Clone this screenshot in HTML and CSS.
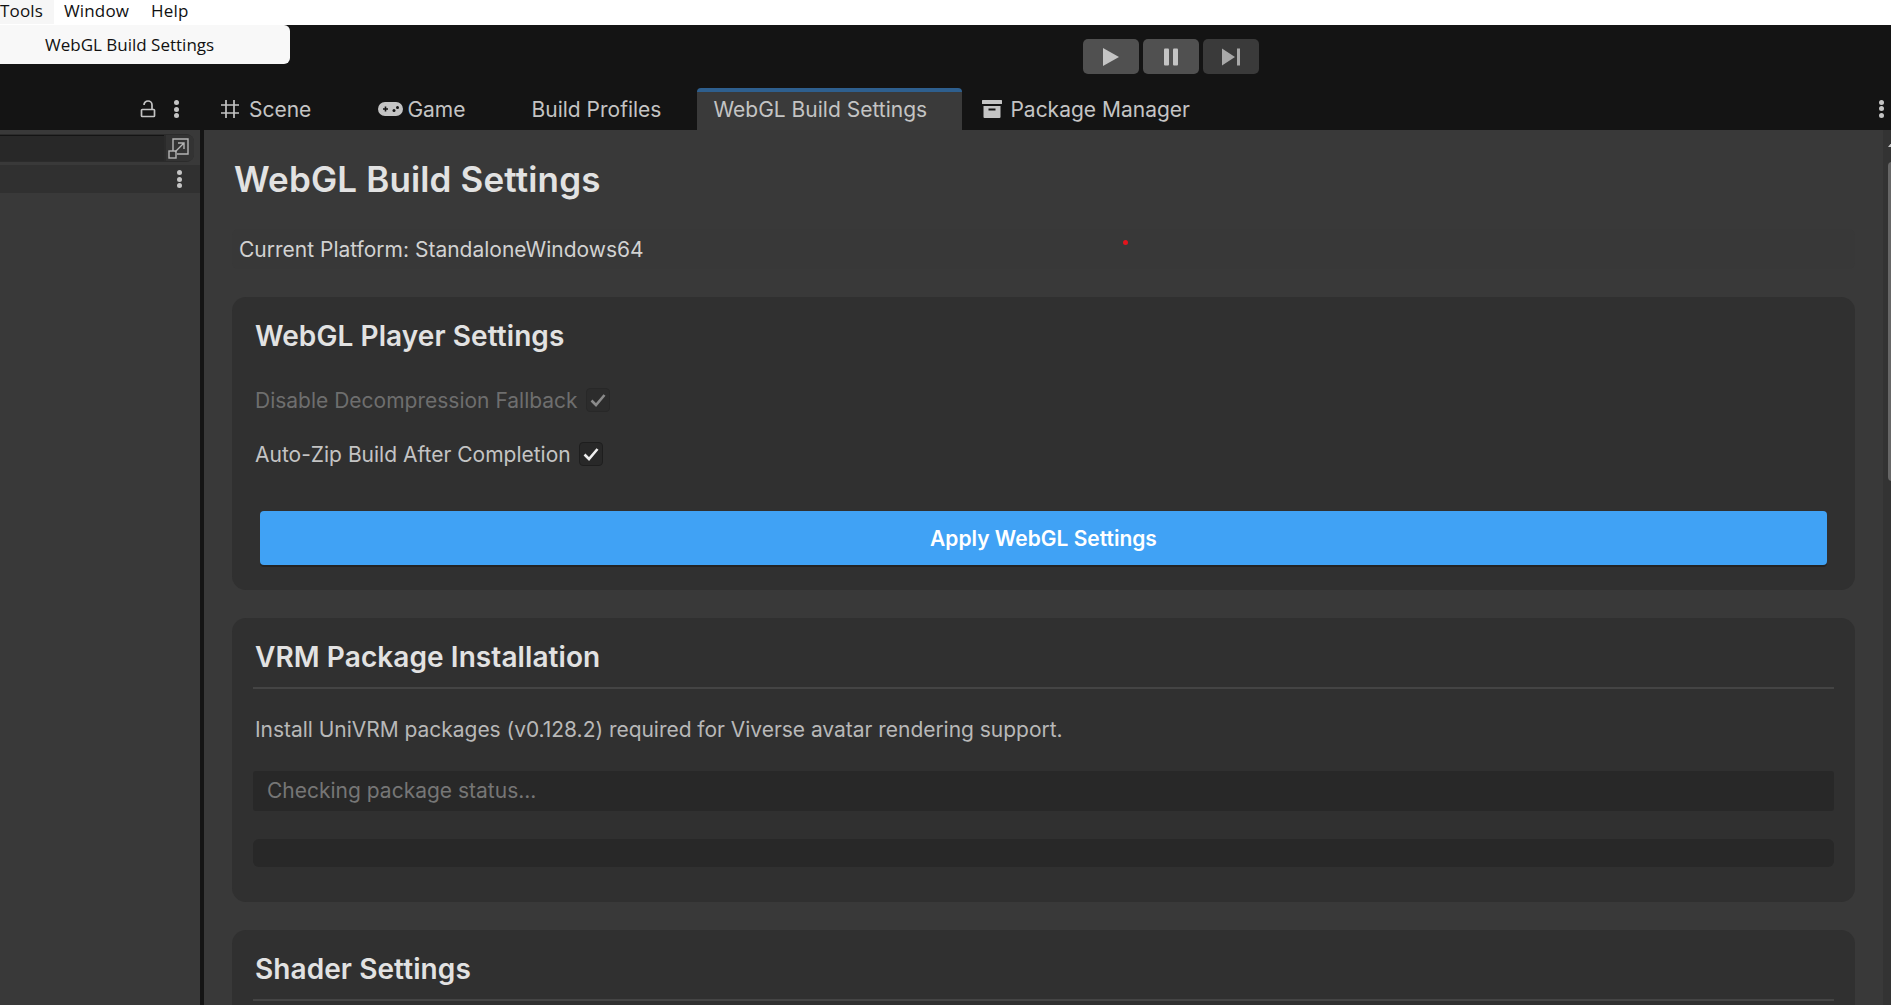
FILE: index.html
```html
<!doctype html>
<html lang="en">
    <head>
        <meta charset="UTF-8" />
        <title>WebGL Build Settings</title>
        <link rel="stylesheet" href="styles.css">
    </head>
    <body>
        <nav class="menubar">
            <span class="menu-item menu-open">Tools</span>
            <span class="menu-item">Window</span>
            <span class="menu-item">Help</span>
        </nav>
        <div class="menu-popup">WebGL Build Settings</div>

        <div class="toolbar">
            <div class="play-buttons">
                <button type="button" class="play-btn btn-lit">
                    <svg width="16" height="18" viewBox="0 0 16 18"><path d="M0 0 L16 9 L0 18 Z" fill="#c4c4c4"/></svg>
                </button>
                <button type="button" class="play-btn btn-lit">
                    <svg width="16" height="18" viewBox="0 0 16 18"><rect x="1" y="0.5" width="5" height="17" rx="1" fill="#c4c4c4"/><rect x="10" y="0.5" width="5" height="17" rx="1" fill="#c4c4c4"/></svg>
                </button>
                <button type="button" class="play-btn">
                    <svg width="20" height="18" viewBox="0 0 20 18"><path d="M1 0.5 L14 9 L1 17.5 Z" fill="#a8a8a8"/><rect x="16" y="0.5" width="3" height="17" fill="#a8a8a8"/></svg>
                </button>
            </div>
        </div>

        <div class="tabbar">
            <div class="tabs-left">
                <svg class="lock-icon" width="16" height="18" viewBox="0 0 16 18"><path d="M4 5 a4 4 0 0 1 8 0 V9" fill="none" stroke="#c4c4c4" stroke-width="1.7"/><rect x="1.5" y="9.5" width="13" height="7" rx="0.8" fill="none" stroke="#c4c4c4" stroke-width="1.7"/></svg>
                <span class="dots"><i></i><i></i><i></i></span>
            </div>
            <div class="tab tab-scene">
                <svg width="18" height="18" viewBox="0 0 18 18"><path d="M5 0 V18 M13 0 V18 M0 5 H18 M0 13 H18" stroke="#c4c4c4" stroke-width="1.7" fill="none"/></svg>
                <span>Scene</span>
            </div>
            <div class="tab tab-game">
                <svg width="25" height="16" viewBox="0 0 25 16"><path d="M7 1 H18 a6.5 6.5 0 0 1 0 14 H7 a6.5 6.5 0 0 1 0 -14 Z" fill="#c4c4c4"/><path d="M5 8 H10 M7.5 5.5 V10.5" stroke="#141414" stroke-width="1.6"/><circle cx="16" cy="9.5" r="1.5" fill="#141414"/><circle cx="19.5" cy="6.5" r="1.5" fill="#141414"/></svg>
                <span>Game</span>
            </div>
            <div class="tab tab-profiles"><span>Build Profiles</span></div>
            <div class="tab tab-active"><span>WebGL Build Settings</span></div>
            <div class="tab tab-package">
                <svg width="20" height="18" viewBox="0 0 20 18"><rect x="0" y="0" width="20" height="4" rx="0.5" fill="#c4c4c4"/><path d="M1.5 6 H18.5 V17 a1 1 0 0 1 -1 1 H2.5 a1 1 0 0 1 -1 -1 Z M6.5 8.5 V10.5 H13.5 V8.5 Z" fill="#c4c4c4" fill-rule="evenodd"/></svg>
                <span>Package Manager</span>
            </div>
            <span class="dots dots-right"><i></i><i></i><i></i></span>
        </div>

        <div class="workspace">
            <aside class="side-panel">
                <div class="search-row">
                    <div class="search-field"></div>
                    <div class="expand-btn">
                        <svg width="21" height="21" viewBox="0 0 21 21"><path d="M5 13 V1 H20 V16 H9" fill="none" stroke="#b4b4b4" stroke-width="1.4"/><rect x="1" y="13" width="7" height="7" fill="none" stroke="#b4b4b4" stroke-width="1.4"/><path d="M7 14 L15.5 5.5 M10 5 H16 V11" fill="none" stroke="#b4b4b4" stroke-width="1.4"/></svg>
                    </div>
                </div>
                <div class="list-head"><span class="dots"><i></i><i></i><i></i></span></div>
            </aside>

            <main class="content">
                <h1>WebGL Build Settings</h1>
                <div class="platform-row">Current Platform: StandaloneWindows64</div>
                <i class="red-dot"></i>

                <section class="card">
                    <h2>WebGL Player Settings</h2>
                    <div class="check-row row-disabled">
                        <label>Disable Decompression Fallback</label>
                        <span class="checkbox"><svg width="16" height="14" viewBox="0 0 16 14"><path d="M1.5 7.5 L6 12 L14.5 2" fill="none" stroke="#8a8a8a" stroke-width="2.6"/></svg></span>
                    </div>
                    <div class="check-row">
                        <label>Auto-Zip Build After Completion</label>
                        <span class="checkbox"><svg width="16" height="14" viewBox="0 0 16 14"><path d="M1.5 7.5 L6 12 L14.5 2" fill="none" stroke="#eeeeee" stroke-width="2.6"/></svg></span>
                    </div>
                    <button type="button" class="apply-btn">Apply WebGL Settings</button>
                </section>

                <section class="card card-vrm">
                    <h2 class="head-line">VRM Package Installation</h2>
                    <p class="info">Install UniVRM packages (v0.128.2) required for Viverse avatar rendering support.</p>
                    <div class="status-box">Checking package status...</div>
                    <div class="progress-box"></div>
                </section>

                <section class="card">
                    <h2 class="head-line">Shader Settings</h2>
                </section>
            </main>

            <div class="scrollbar">
                <span class="arrow-up"></span>
                <span class="thumb"></span>
            </div>
        </div>
    </body>
</html>
```

FILE: styles.css
```css
* {
    box-sizing: border-box;
}
html, body {
    height: 100%;
}
body {
    margin: 0;
    height: 1005px;
    overflow: hidden;
    background-color: #141414;
    font-family: Inter, "Liberation Sans", sans-serif;
    color: #c4c4c4;
    display: flex;
    flex-direction: column;
}

/* windows menu */
.menubar {
    height: 25px;
    flex: none;
    background-color: #ffffff;
    display: flex;
    font-family: "Open Sans", sans-serif;
    font-size: 17px;
    letter-spacing: 0.15px;
    color: #111111;
}
.menu-item {
    padding: 0 22px 0 0;
    line-height: 21px;
}
.menu-open {
    background-color: #f6f6f6;
    padding-right: 11px;
    margin-right: 10px;
    height: 24px;
}
.menu-popup {
    position: absolute;
    left: -10px;
    top: 25px;
    width: 300px;
    height: 39px;
    padding-left: 55px;
    background-color: #f8f8f8;
    border-radius: 6px;
    font-family: "Open Sans", sans-serif;
    font-size: 17px;
    line-height: 40px;
    color: #111111;
}

/* toolbar */
.toolbar {
    height: 63px;
    flex: none;
    display: flex;
    padding: 14px 0 0 1083px;
}
.play-buttons {
    display: flex;
    gap: 4px;
}
.play-btn {
    width: 56px;
    height: 35px;
    border: none;
    border-radius: 5px;
    background-color: #3a3a3a;
    display: flex;
    align-items: center;
    justify-content: center;
    padding: 0;
}
.btn-lit {
    background-color: #505050;
}

/* tabs */
.tabbar {
    height: 42px;
    flex: none;
    display: flex;
    align-items: stretch;
    font-size: 21px;
    position: relative;
}
.tabs-left {
    width: 200px;
    flex: none;
    display: flex;
    align-items: center;
    padding-left: 140px;
    gap: 18px;
}
.tab {
    display: flex;
    align-items: center;
    gap: 9px;
}
.tab-scene {
    margin-left: 21px;
    gap: 10px;
}
.tab-game {
    margin-left: 67px;
    gap: 4px;
}
.tab-profiles {
    margin-left: 66px;
}
.tab-active {
    margin-left: 36px;
    width: 265px;
    padding: 0 0 4px 16px;
    background-color: #3a3a3a;
    border-top: 4px solid #2e5f8e;
    border-radius: 4px 4px 0 0;
}
.tab-package {
    margin-left: 20px;
    gap: 8px;
}
.dots {
    display: inline-flex;
    flex-direction: column;
    gap: 1.3px;
    align-items: center;
    justify-content: center;
}
.dots i {
    width: 5px;
    height: 5px;
    border-radius: 50%;
    background-color: #c4c4c4;
}
.dots-right {
    position: absolute;
    right: 7px;
    top: 12px;
}

/* main area */
.workspace {
    flex: 1;
    min-height: 0;
    display: flex;
    background-color: #393939;
}
.side-panel {
    width: 200px;
    flex: none;
    background-color: #393939;
}
.search-row {
    display: flex;
    width: 194px;
    height: 28px;
    margin-top: 4px;
    padding: 1px 0;
    background-color: #2b2b2b;
    border-radius: 0 8px 8px 0;
}
.search-field {
    width: 164px;
    background-color: #282828;
    border-top: 1px solid #141414;
}
.expand-btn {
    width: 28px;
    margin-left: 2px;
    padding-left: 2px;
    background-color: #333333;
    border-radius: 0 6px 6px 0;
    display: flex;
    align-items: center;
}
.list-head {
    height: 28px;
    margin-top: 3px;
    background-color: #303030;
    display: flex;
    align-items: center;
    justify-content: flex-end;
    padding-right: 18px;
}
.content {
    flex: 1;
    min-width: 0;
    padding: 0 28px 0 28px;
    border-left: 4px solid #141414;
    position: relative;
}
h1 {
    margin: 0;
    padding: 29px 0 0 2px;
    font-size: 35px;
    font-weight: 600;
    letter-spacing: 0.15px;
    line-height: 41px;
    color: #e2e2e2;
}
.platform-row {
    margin-top: 29px;
    height: 40px;
    padding-left: 7px;
    font-size: 21px;
    line-height: 41px;
    border-radius: 6px;
    background-color: #383838;
    color: #d2d2d2;
}
.red-dot {
    position: absolute;
    left: 919px;
    top: 110px;
    width: 5px;
    height: 5px;
    border-radius: 50%;
    background-color: #e3141c;
}
.card {
    margin-top: 28px;
    padding: 22px 21px 25px 21px;
    background-color: #303030;
    border-radius: 14px;
}
.card-vrm {
    padding-bottom: 35px;
}
h2 {
    margin: 0;
    padding-left: 2px;
    font-size: 28px;
    font-weight: 600;
    letter-spacing: 0.08px;
    line-height: 34px;
    color: #e2e2e2;
}
.head-line {
    padding-bottom: 13px;
    border-bottom: 2px solid #444444;
}
.check-row {
    display: flex;
    align-items: center;
    gap: 8px;
    padding-left: 2px;
    height: 24px;
    font-size: 21px;
    color: #c4c4c4;
}
h2 + .check-row {
    margin-top: 35px;
}
.check-row + .check-row {
    margin-top: 30px;
}
.row-disabled {
    color: #6e6e6e;
}
.checkbox {
    width: 24px;
    height: 24px;
    background-color: #282828;
    border: 1px solid #1e1e1e;
    border-radius: 4px;
    display: flex;
    align-items: center;
    justify-content: center;
}
.row-disabled .checkbox {
    background-color: #2c2c2c;
    border-color: #282828;
}
.apply-btn {
    display: block;
    width: calc(100% - 14px);
    height: 54px;
    margin: 45px 7px 0 7px;
    border: none;
    border-radius: 4px;
    padding: 0;
    background-color: #40a2f5;
    color: #ffffff;
    font-family: Inter, "Liberation Sans", sans-serif;
    font-size: 21px;
    font-weight: 600;
    box-shadow: 0 2px 0 #232323;
}
.info {
    margin: 27px 0 0 2px;
    font-size: 21px;
    letter-spacing: -0.03px;
    line-height: 28px;
    color: #b8b8b8;
}
.status-box {
    margin-top: 27px;
    height: 40px;
    padding-left: 14px;
    font-size: 21px;
    line-height: 40px;
    border-radius: 3px;
    background-color: #282828;
    color: #767676;
}
.progress-box {
    margin-top: 28px;
    height: 28px;
    border-radius: 6px;
    background-color: #282828;
}
.scrollbar {
    width: 8px;
    flex: none;
    background-color: #333333;
    position: relative;
}
.arrow-up {
    position: absolute;
    top: 12px;
    left: 5px;
    width: 0;
    height: 0;
    border-left: 4px solid transparent;
    border-right: 4px solid transparent;
    border-bottom: 5px solid #c4c4c4;
}
.thumb {
    position: absolute;
    top: 32px;
    left: 5px;
    width: 10px;
    height: 319px;
    border-radius: 4px;
    background-color: #666666;
}
```
